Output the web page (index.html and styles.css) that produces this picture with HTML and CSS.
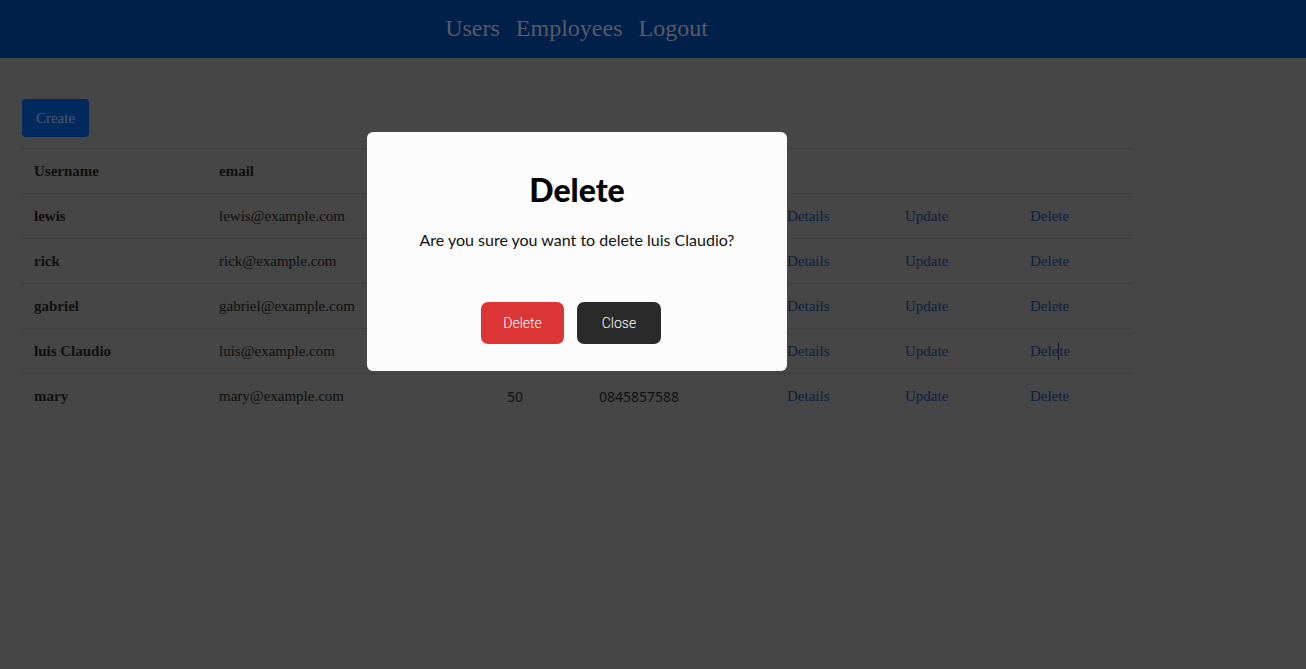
FILE: index.html
```html
<!DOCTYPE html>
<html lang="en">
<head>
<meta charset="utf-8">
<title>Users</title>
<link rel="stylesheet" href="styles.css">
</head>
<body>
<header class="navbar">
  <nav class="nav-inner">
    <a class="nav-link" href="#">Users</a>
    <a class="nav-link" href="#">Employees</a>
    <a class="nav-link" href="#">Logout</a>
  </nav>
</header>
<main class="content">
  <button class="btn-create">Create</button>
  <table class="users">
    <colgroup>
      <col class="c-user"><col class="c-email"><col class="c-age"><col class="c-phone"><col class="c-det"><col class="c-upd"><col class="c-del">
    </colgroup>
    <thead>
      <tr><th>Username</th><th>email</th><th>Age</th><th>Phone</th><th></th><th></th><th></th></tr>
    </thead>
    <tbody>
      <tr><td class="name">lewis</td><td>lewis@example.com</td><td class="num">32</td><td class="num">0845857511</td><td><a href="#">Details</a></td><td><a href="#">Update</a></td><td><a href="#">Delete</a></td></tr>
      <tr><td class="name">rick</td><td>rick@example.com</td><td class="num">28</td><td class="num">0845857522</td><td><a href="#">Details</a></td><td><a href="#">Update</a></td><td><a href="#">Delete</a></td></tr>
      <tr><td class="name">gabriel</td><td>gabriel@example.com</td><td class="num">41</td><td class="num">0845857533</td><td><a href="#">Details</a></td><td><a href="#">Update</a></td><td><a href="#">Delete</a></td></tr>
      <tr><td class="name">luis Claudio</td><td>luis@example.com</td><td class="num">35</td><td class="num">0845857544</td><td><a href="#">Details</a></td><td><a href="#">Update</a></td><td><a href="#">Dele<span class="caret"></span>te</a></td></tr>
      <tr><td class="name">mary</td><td>mary@example.com</td><td class="num">50</td><td class="num">0845857588</td><td><a href="#">Details</a></td><td><a href="#">Update</a></td><td><a href="#">Delete</a></td></tr>
    </tbody>
  </table>
</main>
<div class="modal">
  <h2 class="modal-title">Delete</h2>
  <p class="modal-text">Are you sure you want to delete luis Claudio?</p>
  <div class="modal-actions">
    <button class="btn btn-danger">Delete</button>
    <button class="btn btn-dark">Close</button>
  </div>
</div>
</body>
</html>
```

FILE: styles.css
```css
* { box-sizing: border-box; }
html, body { margin: 0; padding: 0; }
body {
  background: #464646;
  font-family: "Liberation Serif", "Times New Roman", serif;
  color: #0f0f0f;
  min-height: 669px;
}
.navbar {
  height: 58px;
  background: #00204a;
  display: flex;
  align-items: center;
}
.nav-inner {
  width: 1154px;
  display: flex;
  justify-content: center;
  gap: 16px;
  padding-bottom: 1px;
  padding-right: 1px;
}
.nav-link {
  font-size: 24px;
  color: #585b63;
  text-decoration: none;
}
.content {
  padding: 41px 22px 0 22px;
}
.btn-create {
  display: block;
  width: 67px;
  height: 38px;
  border: none;
  border-radius: 4px;
  background: #00295f;
  color: #4c5a6e;
  font-family: "Liberation Serif", serif;
  font-size: 15px;
  padding: 0;
  margin-bottom: 11px;
}
.users {
  width: 1110px;
  border-collapse: collapse;
  table-layout: fixed;
  font-size: 15px;
}
.c-user { width: 185px; }
.c-email { width: 288px; }
.c-age { width: 92px; }
.c-phone { width: 188px; }
.c-det { width: 118px; }
.c-upd { width: 125px; }
.c-del { width: 114px; }
.users th, .users td {
  height: 45px;
  padding: 0 12px;
  text-align: left;
  border-top: 1px solid #3e3e3e;
  vertical-align: middle;
}
.users th { font-weight: bold; }
.users td.name { font-weight: bold; }
.users td.num {
  font-family: "Noto Sans", "Open Sans", sans-serif;
  font-size: 14px;
  color: #111;
}
.users a {
  color: #0c2141;
  text-decoration: none;
}
.caret {
  display: inline-block;
  width: 1px;
  height: 18px;
  background: #0a1a30;
  vertical-align: -4px;
}
.modal {
  position: fixed;
  left: 367px;
  top: 132px;
  width: 420px;
  height: 239px;
  background: #fcfcfc;
  border-radius: 6px;
  display: flex;
  flex-direction: column;
  align-items: center;
  padding-top: 36px;
}
.modal-title {
  margin: 0;
  font-family: Lato, "Noto Sans", sans-serif;
  font-weight: 900;
  font-size: 32px;
  line-height: 44px;
  color: #000;
}
.modal-text {
  margin: 16px 0 0 0;
  font-family: Lato, "Noto Sans", sans-serif;
  font-size: 16px;
  line-height: 24px;
  color: #111;
}
.modal-actions {
  display: flex;
  gap: 13px;
  margin-top: 50px;
  margin-right: 12px;
}
.btn {
  height: 42px;
  border: none;
  border-radius: 7px;
  color: #fff;
  font-family: Roboto, "Liberation Sans", sans-serif;
  font-weight: 300;
  font-size: 14px;
  padding: 0;
}
.btn-danger { background: #dc3535; width: 83px; }
.btn-dark { background: #2a2a2a; width: 84px; }
```
